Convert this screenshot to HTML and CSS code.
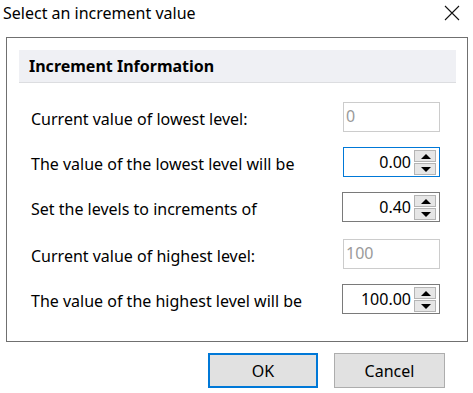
FILE: index.html
```html
<!DOCTYPE html>
<html lang="en">
<head>
    <meta charset="UTF-8">
    <title>Select an increment value</title>
    <link rel="stylesheet" href="styles.css">
</head>
<body>
    <div class="titlebar">
        <span class="title">Select an increment value</span>
        <svg class="close" width="16" height="16" viewBox="0 0 16 16">
            <path d="M1 1 L15 15 M15 1 L1 15" stroke="#111" stroke-width="1.1" fill="none"/>
        </svg>
    </div>

    <div class="group">
        <div class="group-header">Increment Information</div>

        <div class="rows">
            <div class="row">
                <label>Current value of lowest level:</label>
                <div class="readonly">0</div>
            </div>
            <div class="row">
                <label>The value of the lowest level will be</label>
                <div class="spinner focused">
                    <span class="value">0.00</span>
                    <div class="spin">
                        <span class="up"></span>
                        <span class="down"></span>
                    </div>
                </div>
            </div>
            <div class="row">
                <label>Set the levels to increments of</label>
                <div class="spinner">
                    <span class="value">0.40</span>
                    <div class="spin">
                        <span class="up"></span>
                        <span class="down"></span>
                    </div>
                </div>
            </div>
            <div class="row spaced">
                <label>Current value of highest level:</label>
                <div class="readonly">100</div>
            </div>
            <div class="row">
                <label>The value of the highest level will be</label>
                <div class="spinner">
                    <span class="value">100.00</span>
                    <div class="spin">
                        <span class="up"></span>
                        <span class="down"></span>
                    </div>
                </div>
            </div>
        </div>
    </div>

    <div class="buttons">
        <button class="btn default">OK</button>
        <button class="btn">Cancel</button>
    </div>
</body>
</html>
```

FILE: styles.css
```css
/* Window */
body {
    margin: 0;
    width: 473px;
    height: 393px;
    background-color: #fff;
    color: #000;
    font-family: "Noto Sans", "Open Sans", sans-serif;
    font-size: 16px;
    overflow: hidden;
}

.titlebar {
    display: flex;
    justify-content: space-between;
    align-items: center;
    height: 30px;
    padding: 0 13px 0 3px;
}

.title {
    font-size: 16px;
    margin-top: -4px;
}

.close {
    margin-top: -5px;
}

/* Group box */
.group {
    margin: 7px 0 0 6px;
    width: 462px;
    height: 305px;
    border: 1px solid #707070;
    padding: 12px 11px 0 12px;
    box-sizing: border-box;
}

.group-header {
    height: 32px;
    line-height: 33px;
    padding-left: 10px;
    background-color: #eff0f4;
    border-bottom: 1px solid #dcdde0;
    font-weight: bold;
    font-size: 16px;
}

.rows {
    display: flex;
    flex-direction: column;
    gap: 15px;
    margin-top: 19px;
    padding-left: 12px;
}

.row {
    display: flex;
    justify-content: space-between;
    align-items: center;
    height: 30px;
    padding-right: 16px;
}

.row.spaced {
    margin-top: 2px;
}

.row label {
    margin-top: 4px;
}

/* Text fields */
.readonly {
    width: 97px;
    height: 30px;
    box-sizing: border-box;
    border: 1px solid #cccccc;
    color: #9a9a9a;
    padding: 2px 0 0 2px;
}

.spinner {
    display: flex;
    align-items: center;
    width: 98px;
    height: 30px;
    box-sizing: border-box;
    border: 1px solid #7a7a7a;
    padding: 0 3px 0 4px;
}

.spinner.focused {
    border-color: #0078d7;
    width: 97px;
}

.spinner .value {
    flex: 1;
    text-align: right;
    padding-right: 3px;
}

.spin {
    display: flex;
    flex-direction: column;
    width: 22px;
}

.spin span {
    position: relative;
    height: 10px;
    background-color: #e6e6e6;
    border: 1px solid #b4b4b4;
}

.spin .down {
    margin-top: 1px;
}

.spin span::after {
    content: "";
    position: absolute;
    left: 6px;
    top: 3px;
    border-left: 5px solid transparent;
    border-right: 5px solid transparent;
}

.spin .up::after {
    border-bottom: 5px solid #000;
}

.spin .down::after {
    border-top: 5px solid #000;
}

/* Dialog buttons */
.buttons {
    display: flex;
    justify-content: flex-end;
    gap: 16px;
    margin: 11px 28px 0 0;
}

.btn {
    width: 111px;
    height: 35px;
    font-family: inherit;
    font-size: 16px;
    background-color: #e1e1e1;
    border: 1px solid #adadad;
    padding: 0;
}

.btn.default {
    width: 110px;
    border: 2px solid #0078d7;
}
```
